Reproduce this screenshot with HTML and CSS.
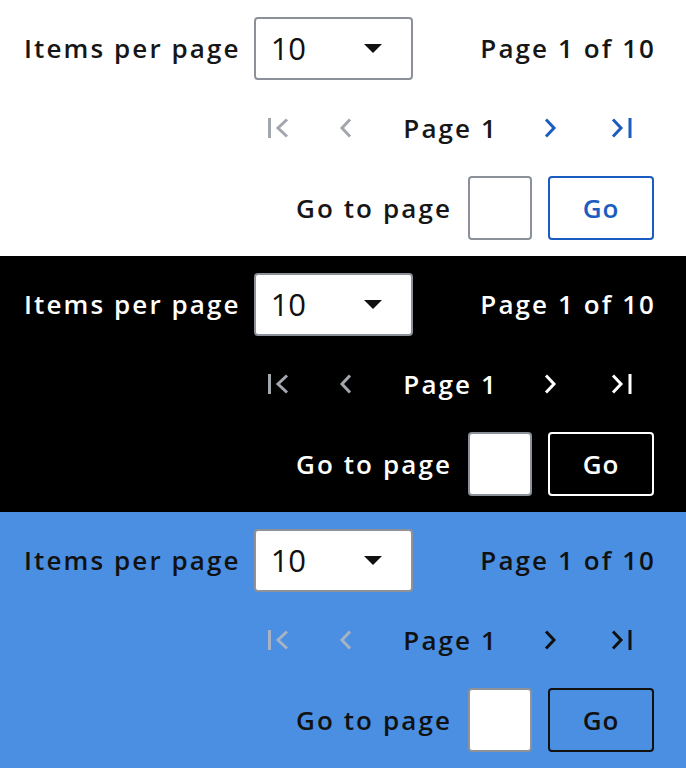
FILE: index.html
```html
<!DOCTYPE html>
<html lang="en">
<head>
<meta charset="utf-8">
<title>Pagination</title>
<link rel="stylesheet" href="styles.css">
</head>
<body>
<section class="pager theme-light">
  <div class="row row-top">
    <div class="per-page">
      <span class="label">Items per page</span>
      <div class="select"><span class="select-value">10</span><svg class="caret" width="18" height="9" viewBox="0 0 18 9"><polygon points="0,0 18,0 9,9"/></svg></div>
    </div>
    <span class="label page-of">Page 1 of 10</span>
  </div>
  <div class="row row-nav">
    <button class="nav-btn first disabled" aria-label="First page"><svg width="24" height="20" viewBox="0 0 24 20"><rect x="2" y="0" width="3" height="20"/><polyline points="21,1.5 12,10 21,18.5"/></svg></button>
    <button class="nav-btn prev disabled" aria-label="Previous page"><svg width="24" height="20" viewBox="0 0 24 20"><polyline points="16,1.5 8,10 16,18.5"/></svg></button>
    <span class="label current">Page 1</span>
    <button class="nav-btn next" aria-label="Next page"><svg width="24" height="20" viewBox="0 0 24 20"><polyline points="8,1.5 16,10 8,18.5"/></svg></button>
    <button class="nav-btn last" aria-label="Last page"><svg width="24" height="20" viewBox="0 0 24 20"><polyline points="3,1.5 11,10 3,18.5"/><rect x="18.5" y="0" width="3" height="20"/></svg></button>
  </div>
  <div class="row row-go">
    <span class="label">Go to page</span>
    <div class="go-input"></div>
    <button class="go-btn">Go</button>
  </div>
</section>

<section class="pager theme-dark">
  <div class="row row-top">
    <div class="per-page">
      <span class="label">Items per page</span>
      <div class="select"><span class="select-value">10</span><svg class="caret" width="18" height="9" viewBox="0 0 18 9"><polygon points="0,0 18,0 9,9"/></svg></div>
    </div>
    <span class="label page-of">Page 1 of 10</span>
  </div>
  <div class="row row-nav">
    <button class="nav-btn first disabled" aria-label="First page"><svg width="24" height="20" viewBox="0 0 24 20"><rect x="2" y="0" width="3" height="20"/><polyline points="21,1.5 12,10 21,18.5"/></svg></button>
    <button class="nav-btn prev disabled" aria-label="Previous page"><svg width="24" height="20" viewBox="0 0 24 20"><polyline points="16,1.5 8,10 16,18.5"/></svg></button>
    <span class="label current">Page 1</span>
    <button class="nav-btn next" aria-label="Next page"><svg width="24" height="20" viewBox="0 0 24 20"><polyline points="8,1.5 16,10 8,18.5"/></svg></button>
    <button class="nav-btn last" aria-label="Last page"><svg width="24" height="20" viewBox="0 0 24 20"><polyline points="3,1.5 11,10 3,18.5"/><rect x="18.5" y="0" width="3" height="20"/></svg></button>
  </div>
  <div class="row row-go">
    <span class="label">Go to page</span>
    <div class="go-input"></div>
    <button class="go-btn">Go</button>
  </div>
</section>

<section class="pager theme-blue">
  <div class="row row-top">
    <div class="per-page">
      <span class="label">Items per page</span>
      <div class="select"><span class="select-value">10</span><svg class="caret" width="18" height="9" viewBox="0 0 18 9"><polygon points="0,0 18,0 9,9"/></svg></div>
    </div>
    <span class="label page-of">Page 1 of 10</span>
  </div>
  <div class="row row-nav">
    <button class="nav-btn first disabled" aria-label="First page"><svg width="24" height="20" viewBox="0 0 24 20"><rect x="2" y="0" width="3" height="20"/><polyline points="21,1.5 12,10 21,18.5"/></svg></button>
    <button class="nav-btn prev disabled" aria-label="Previous page"><svg width="24" height="20" viewBox="0 0 24 20"><polyline points="16,1.5 8,10 16,18.5"/></svg></button>
    <span class="label current">Page 1</span>
    <button class="nav-btn next" aria-label="Next page"><svg width="24" height="20" viewBox="0 0 24 20"><polyline points="8,1.5 16,10 8,18.5"/></svg></button>
    <button class="nav-btn last" aria-label="Last page"><svg width="24" height="20" viewBox="0 0 24 20"><polyline points="3,1.5 11,10 3,18.5"/><rect x="18.5" y="0" width="3" height="20"/></svg></button>
  </div>
  <div class="row row-go">
    <span class="label">Go to page</span>
    <div class="go-input"></div>
    <button class="go-btn">Go</button>
  </div>
</section>
</body>
</html>
```

FILE: styles.css
```css
html, body {
  margin: 0;
  padding: 0;
}

body {
  font-family: "Open Sans", "Liberation Sans", sans-serif;
  width: 686px;
}

.pager {
  box-sizing: border-box;
  height: 256px;
  padding: 16px 32px 16px 24px;
  display: flex;
  flex-direction: column;
  gap: 16px;
  --fg: #161616;
  --muted: #a2a6ad;
  --accent: #1b5cc1;
  --field-border: #8b9099;
  color: var(--fg);
}

.theme-light {
  background: #ffffff;
}

.theme-dark {
  background: #000000;
  --fg: #ffffff;
  --muted: #a2a6ad;
  --accent: #ffffff;
}

.theme-blue {
  background: #4a8fe2;
  --fg: #111111;
  --muted: #a6b3c4;
  --accent: #111111;
  --field-border: #8f9399;
}

.row {
  height: 64px;
  display: flex;
  align-items: center;
}

.row-top {
  justify-content: space-between;
}

.row-nav,
.row-go {
  justify-content: flex-end;
}

.label {
  font-size: 26px;
  font-weight: 600;
  letter-spacing: 2.1px;
  line-height: 34px;
  white-space: nowrap;
}

.page-of {
  margin-right: -2.1px;
}

.per-page {
  display: flex;
  align-items: center;
  gap: 13px;
}

.select {
  box-sizing: border-box;
  width: 159px;
  height: 63px;
  border: 2px solid var(--field-border);
  border-radius: 4px;
  background: #ffffff;
  display: flex;
  align-items: center;
  justify-content: space-between;
  padding: 0 29px 0 15px;
}

.select-value {
  font-size: 31px;
  font-weight: 400;
  color: #111111;
  line-height: 40px;
}

.caret polygon {
  fill: #111111;
}

.nav-btn {
  width: 64px;
  height: 64px;
  border: 0;
  padding: 0;
  margin: 0;
  background: transparent;
  display: flex;
  align-items: center;
  justify-content: center;
  color: var(--accent);
}

.nav-btn svg polyline {
  fill: none;
  stroke: currentColor;
  stroke-width: 3;
}

.nav-btn svg rect {
  fill: currentColor;
}

.nav-btn.disabled {
  color: var(--muted);
}

.first {
  margin-right: 4px;
}

.current {
  margin: 0 20px 0 25px;
}

.next {
  margin-right: 8px;
}

.row-go .label {
  margin-right: 16px;
}

.go-input {
  box-sizing: border-box;
  width: 64px;
  height: 64px;
  border: 2px solid var(--field-border);
  border-radius: 4px;
  background: #ffffff;
  margin-right: 16px;
}

.go-btn {
  box-sizing: border-box;
  width: 106px;
  height: 64px;
  border: 2px solid var(--accent);
  border-radius: 4px;
  background: transparent;
  color: var(--accent);
  font-family: "Open Sans", "Liberation Sans", sans-serif;
  font-size: 26px;
  font-weight: 600;
  letter-spacing: 1px;
  padding: 0;
}

.theme-light .go-btn {
  background: #ffffff;
}

.theme-dark .go-btn {
  background: #000000;
}
```
